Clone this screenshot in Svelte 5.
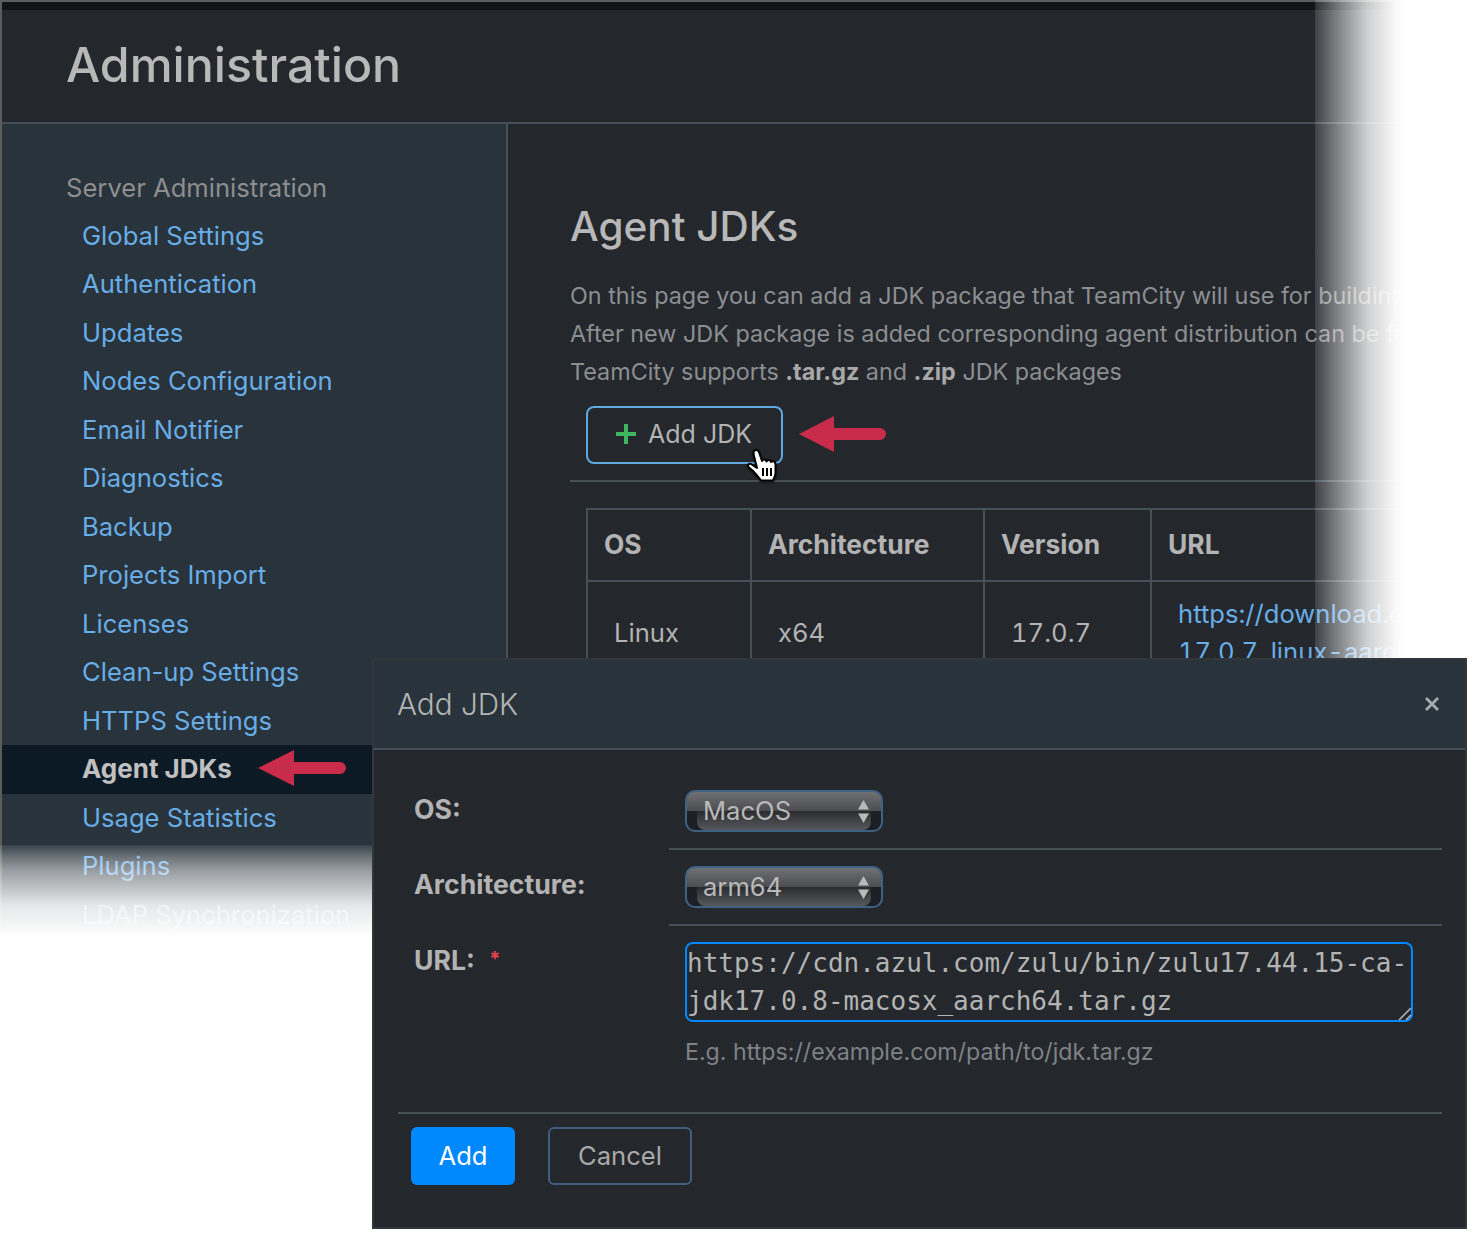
<script>
  const links = [
    'Global Settings',
    'Authentication',
    'Updates',
    'Nodes Configuration',
    'Email Notifier',
    'Diagnostics',
    'Backup',
    'Projects Import',
    'Licenses',
    'Clean-up Settings',
    'HTTPS Settings',
    'Agent JDKs',
    'Usage Statistics',
    'Plugins',
    'LDAP Synchronization'
  ];
  const url = 'https://cdn.azul.com/zulu/bin/zulu17.44.15-ca-jdk17.0.8-macosx_aarch64.tar.gz';
</script>

{#snippet arrows()}
  <svg class="updown" width="11" height="23" viewBox="0 0 11 23">
    <path d="M5.500 0 L11 9.500 H0 Z M0 13.500 H11 L5.500 23 Z" fill="#b9b9b9" />
  </svg>
{/snippet}

<div class="page">
  <div class="window">
    <div class="topbar"></div>
    <header class="head"><h1>Administration</h1></header>
    <div class="columns">
      <nav class="side">
        <div class="side-title">Server Administration</div>
        {#each links as link}
          <a href="#top" class:active={link === 'Agent JDKs'}>{link}</a>
        {/each}
      </nav>
      <main class="content">
        <h2>Agent JDKs</h2>
        <p>On this page you can add a JDK package that TeamCity will use for building</p>
        <p>After new JDK package is added corresponding agent distribution can be found</p>
        <p>TeamCity supports <b>.tar.gz</b> and <b>.zip</b> JDK packages</p>
        <div class="actions">
          <button class="add-jdk">
            <svg width="20" height="20" viewBox="0 0 20 20"><path d="M10 0 V20 M0 10 H20" stroke="#3fb560" stroke-width="4" /></svg>
            Add JDK
          </button>
        </div>
        <table>
          <thead>
            <tr><th class="c1">OS</th><th class="c2">Architecture</th><th class="c3">Version</th><th>URL</th></tr>
          </thead>
          <tbody>
            <tr>
              <td>Linux</td>
              <td>x64</td>
              <td>17.0.7</td>
              <td class="url"><a href="#top">https://download.oracle.com/java/17/archive/jdk-<br />17.0.7_linux-aarch64_bin.tar.gz</a></td>
            </tr>
          </tbody>
        </table>
      </main>
    </div>
  </div>

  <div class="fade-right"></div>
  <div class="fade-bottom"></div>

  <svg class="arrow arrow-top" width="88" height="36" viewBox="0 0 88 36">
    <path d="M0 18 L35 0 V12 H81 a6 6 0 0 1 0 12 H35 V36 Z" fill="#c92b4b" />
  </svg>
  <svg class="arrow arrow-side" width="88" height="36" viewBox="0 0 88 36">
    <path d="M0 18 L36 0 V12 H82 a6 6 0 0 1 0 12 H36 V36 Z" fill="#c92b4b" />
  </svg>

  <svg class="hand" width="31" height="35" viewBox="0 0 31 35">
    <path d="M8 3 C10 1 12 2 13 4 L16 13 C17 11 19.500 11 20.500 13.500 C21.500 11.500 24 11.500 25 14 C26 12.500 29 13 29.500 16 L29.500 25 C29.500 28 28 30 27 32.500 H15 C13 30 10 26 7 23 L2.500 19 C1 17 3 15 5 16 L11 20 L8 8 C7.500 6 7.500 4 8 3 Z" fill="#fff" stroke="#000" stroke-width="2" stroke-linejoin="round" />
    <path d="M17 20 V28 M21 20 V28 M25 20 V28" stroke="#000" stroke-width="2" />
  </svg>

  <section class="modal">
    <div class="modal-head">
      <span>Add JDK</span>
      <svg width="14" height="14" viewBox="0 0 14 14"><path d="M1 1 L13 13 M13 1 L1 13" stroke="#a9acae" stroke-width="2.800" /></svg>
    </div>
    <div class="modal-body">
      <div class="row">
        <div class="label">OS:</div>
        <div class="value">
          <div class="select"><span>MacOS</span>{@render arrows()}</div>
        </div>
      </div>
      <div class="row">
        <div class="label">Architecture:</div>
        <div class="value">
          <div class="select"><span>arm64</span>{@render arrows()}</div>
        </div>
      </div>
      <div class="row last">
        <div class="label">URL: <span class="star">*</span></div>
        <div class="value">
          <div class="field">
            <textarea value={url} spellcheck="false"></textarea>
            <svg class="grip" width="14" height="14" viewBox="0 0 14 14">
              <path d="M1 13 L13 1 M8 13 L13 8" stroke="#b5b5b5" stroke-width="1.500" />
            </svg>
          </div>
          <div class="hint">E.g. https://example.com/path/to/jdk.tar.gz</div>
        </div>
      </div>
      <div class="modal-foot">
        <button class="primary">Add</button>
        <button class="cancel">Cancel</button>
      </div>
    </div>
  </section>
</div>

<style>
  :global(body) {
    margin: 0;
    background: #fff;
  }

  .page {
    position: relative;
    width: 1476px;
    height: 1240px;
    overflow: hidden;
    background: #fff;
    font-family: Inter, "Liberation Sans", sans-serif;
    font-size: 25.600px;
    color: #b3b3b3;
  }

  .window {
    width: 1465px;
    height: 1238px;
    overflow: hidden;
    border: solid #5c5c5c;
    border-width: 2px 0 0 2px;
    background: #24272c;
  }

  .topbar {
    height: 8px;
    background: #101416;
  }

  .head {
    height: 114px;
    box-sizing: border-box;
    padding: 0 0 4px 64px;
    display: flex;
    align-items: center;
    border-bottom: 2px solid #465059;
  }

  .head h1 {
    margin: 0;
    font-size: 48.300px;
    font-weight: 500;
    color: #b8b8b8;
  }

  .columns {
    display: flex;
    height: 1118px;
  }

  .side {
    width: 506px;
    flex: none;
    box-sizing: border-box;
    padding-top: 40px;
    background: #28333c;
    border-right: 2px solid #465059;
    line-height: 48.500px;
  }

  .side-title {
    height: 47.500px;
    padding-left: 64px;
    color: #8e8e8e;
  }

  .side a {
    display: block;
    padding-left: 80px;
    color: #68ade6;
    text-decoration: none;
  }

  .side a.active {
    background: #0c1a26;
    color: #c0c0c0;
    font-size: 26px;
    font-weight: 700;
  }

  .content {
    flex: 1;
    min-width: 0;
    padding: 76px 0 0 62px;
  }

  .content h2 {
    margin: 0 0 23px;
    font-size: 40.500px;
    line-height: 54px;
    font-weight: 500;
    color: #b8b8b8;
  }

  .content p {
    margin: 0;
    line-height: 38px;
    font-size: 23.350px;
    white-space: nowrap;
    color: #8c8f92;
  }

  .content p b {
    color: #a8a8a8;
  }

  .actions {
    padding: 15px 0 16px 16px;
    border-bottom: 2px solid #465059;
  }

  .add-jdk {
    display: flex;
    align-items: center;
    gap: 12px;
    width: 197px;
    height: 58px;
    box-sizing: border-box;
    padding: 0 0 2px 28px;
    background: transparent;
    border: 2px solid #60a8e0;
    border-radius: 8px;
    font: inherit;
    font-size: 25px;
    color: #b3b3b3;
  }

  table {
    margin: 26px 0 0 16px;
    width: 900px;
    border-collapse: collapse;
    table-layout: fixed;
    font-variant-numeric: tabular-nums;
  }

  th, td {
    border: 2px solid #465059;
    text-align: left;
    vertical-align: middle;
  }

  th {
    height: 68px;
    padding: 0 16px 2px;
    font-size: 26.400px;
    font-weight: 700;
    color: #b3b3b3;
  }

  .c1 { width: 130px; }
  .c2 { width: 199px; }
  .c3 { width: 133px; }

  td {
    padding: 13px 26px 15px;
    line-height: 38px;
  }

  td.url {
    white-space: nowrap;
    overflow: hidden;
  }

  td.url a {
    color: #68ade6;
    text-decoration: none;
  }

  .fade-right {
    position: absolute;
    left: 1315px;
    top: 0;
    width: 90px;
    height: 660px;
    background: linear-gradient(to right, rgba(255, 255, 255, 0.12) 0, rgba(255, 255, 255, 0.45) 25px, rgba(255, 255, 255, 0.78) 52px, rgba(255, 255, 255, 0.97) 80px, #fff 90px);
  }

  .fade-right::after {
    content: '';
    position: absolute;
    left: 90px;
    top: 0;
    width: 80px;
    height: 660px;
    background: #fff;
  }

  .fade-bottom {
    position: absolute;
    left: 0;
    right: 0;
    top: 845px;
    bottom: 0;
    background: linear-gradient(to bottom, rgba(255, 255, 255, 0.08) 0, rgba(255, 255, 255, 0.33) 13px, rgba(255, 255, 255, 0.53) 26px, rgba(255, 255, 255, 0.88) 60px, #fff 92px, #fff 100%);
  }

  .arrow {
    position: absolute;
  }

  .arrow-top {
    left: 799px;
    top: 416px;
  }

  .arrow-side {
    left: 258px;
    top: 750px;
  }

  .hand {
    position: absolute;
    left: 746px;
    top: 448px;
    filter: drop-shadow(0 1px 1px rgba(0, 0, 0, 0.6));
  }

  .modal {
    position: absolute;
    left: 372px;
    top: 658px;
    width: 1095px;
    height: 571px;
    box-sizing: border-box;
    border: 2px solid #33373c;
    background: #24272c;
  }

  .modal-head {
    height: 90px;
    box-sizing: border-box;
    padding: 0 26px 0 23px;
    display: flex;
    align-items: center;
    justify-content: space-between;
    background: #28333c;
    border-bottom: 2px solid #465059;
    font-size: 29.700px;
    font-weight: 300;
    color: #b3b3b3;
  }

  .modal-body {
    padding: 0 23px 0 24px;
  }

  .row {
    display: grid;
    grid-template-columns: 271px 1fr;
  }

  .label {
    padding: 43px 0 0 16px;
    line-height: 32px;
    font-size: 26.600px;
    font-weight: 700;
  }

  .star {
    margin-left: 8px;
    color: #e0434f;
    font-size: 20px;
    vertical-align: 4px;
  }

  .value {
    padding: 40px 0 16px 16px;
    border-bottom: 2px solid #465059;
  }

  .row + .row .label {
    padding-top: 18px;
  }

  .row.last .label {
    padding-top: 17px;
  }

  .row + .row .value {
    padding-top: 16px;
  }

  .row.last .value {
    border-bottom: 0;
    padding-bottom: 44px;
  }

  .select {
    position: relative;
    width: 198px;
    height: 42px;
    box-sizing: border-box;
    border: 2px solid #3f6284;
    border-radius: 10px;
    background: linear-gradient(to bottom, #6f7073 0, #4b4d50 50%, #1c1f23 50%, #1c1f23 100%);
    overflow: hidden;
  }

  .select::after {
    content: '';
    position: absolute;
    left: 10px;
    right: 10px;
    top: 19px;
    bottom: 0;
    border-radius: 0 0 8px 8px;
    background: linear-gradient(to bottom, #292b2f, #57595c);
  }

  .select span {
    position: absolute;
    z-index: 1;
    left: 16px;
    top: 0;
    line-height: 38px;
    color: #b9b9b9;
  }

  .updown {
    position: absolute;
    z-index: 1;
    right: 12px;
    top: 8px;
  }

  .field {
    position: relative;
    width: 728px;
  }

  textarea {
    display: block;
    width: 728px;
    height: 80px;
    box-sizing: border-box;
    margin: 0;
    padding: 0;
    border: 2px solid #0088ff;
    border-radius: 8px;
    outline: none;
    resize: none;
    background: transparent;
    color: #b3b3b3;
    font-family: "DejaVu Sans Mono", monospace;
    font-size: 26px;
    line-height: 38px;
  }

  .grip {
    position: absolute;
    right: 1px;
    bottom: 1px;
  }

  .hint {
    margin-top: 14px;
    font-size: 23.200px;
    line-height: 32px;
    color: #7e8286;
  }

  .modal-foot {
    display: flex;
    gap: 33px;
    padding: 13px 0 0 13px;
    border-top: 2px solid #465059;
  }

  .modal-foot button {
    height: 58px;
    box-sizing: border-box;
    padding: 0 0 2px;
    border-radius: 6px;
    font: inherit;
  }

  .primary {
    width: 104px;
    border: 0;
    background: #0088ff;
    color: #fff;
    font-weight: 500;
  }

  .cancel {
    width: 144px;
    border: 2px solid #3f5f7d;
    background: transparent;
    color: #a9a9a9;
  }
</style>
